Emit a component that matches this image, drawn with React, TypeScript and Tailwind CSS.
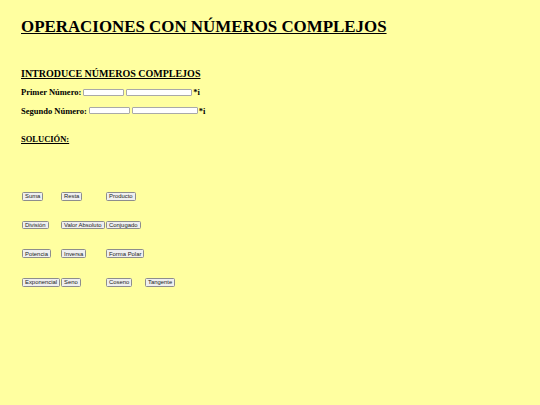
import React from "react";

const rows: string[][] = [
  ["Suma", "Resta", "Producto"],
  ["División", "Valor Absoluto", "Conjugado"],
  ["Potencia", "Inversa", "Forma Polar"],
  ["Exponencial", "Seno", "Coseno", "Tangente"],
];

const colWidths = ["w-[39px]", "w-[45px]", "w-[39px]", "w-auto"];

const Btn = ({ label }: { label: string }) => (
  <button className="h-[8.6px] px-[2px] border border-[#8d8d8d] bg-[#efefef] rounded-[1.5px] text-[5.9px] leading-[6px] text-[#222] font-['Liberation_Sans',Arial,sans-serif] whitespace-nowrap">
    {label}
  </button>
);

const Field = ({ w }: { w: string }) => (
  <input
    type="text"
    className={`${w} h-[7px] bg-white border border-[#a9a9a9] rounded-[1px] outline-none`}
  />
);

export default function App() {
  return (
    <div className="min-h-screen w-full bg-[#ffffa0] text-black font-['Liberation_Serif','Times_New_Roman',serif] pl-[21px] pt-[18px]">
      <h1 className="text-[16.9px] leading-[17px] font-bold underline">
        OPERACIONES CON NÚMEROS COMPLEJOS
      </h1>

      <h2 className="mt-[33.5px] text-[10px] leading-[10px] font-bold underline">
        INTRODUCE NÚMEROS COMPLEJOS
      </h2>

      <div className="mt-[9.7px] h-[9px] flex items-center text-[8.5px] font-bold">
        <span>Primer Número:</span>
        <span className="ml-[2px] flex items-center gap-[2px]">
          <Field w="w-[41px]" />
          <Field w="w-[66px]" />
        </span>
        <span className="ml-[1px]">*i</span>
      </div>

      <div className="mt-[9.3px] h-[9px] flex items-center text-[8.5px] font-bold">
        <span>Segundo Número:</span>
        <span className="ml-[2px] flex items-center gap-[2px]">
          <Field w="w-[41px]" />
          <Field w="w-[66px]" />
        </span>
        <span className="ml-[1px]">*i</span>
      </div>

      <h3 className="mt-[19.5px] text-[8.5px] leading-[8.5px] font-bold underline">
        SOLUCIÓN:
      </h3>

      <div className="mt-[48.5px] ml-[1px] flex flex-col">
        {rows.map((row, i) => (
          <div key={i} className="flex h-[28.67px] items-start">
            {row.map((label, j) => (
              <div key={label} className={`${colWidths[j]} flex items-start`}>
                <Btn label={label} />
              </div>
            ))}
          </div>
        ))}
      </div>
    </div>
  );
}
